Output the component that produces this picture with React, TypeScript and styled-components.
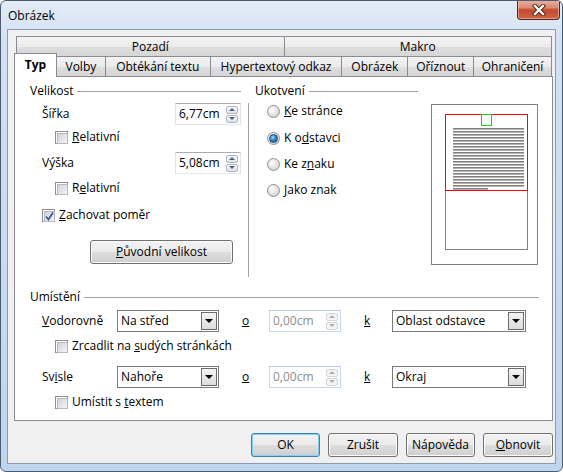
import React from "react";
import styled, { createGlobalStyle, css } from "styled-components";

const GlobalStyle = createGlobalStyle`
  html, body { margin: 0; padding: 0; }
  body {
    width: 563px;
    height: 472px;
    overflow: hidden;
    background: #ffffff;
    font-family: "Open Sans", "Noto Sans", sans-serif;
    font-size: 12px;
    line-height: 16px;
    color: #000;
  }
  * { box-sizing: border-box; }
`;

const Window = styled.div`
  width: 563px;
  height: 472px;
  border: 1px solid #4b5b6f;
  border-radius: 6px;
  background: linear-gradient(180deg, #e3ecf7 0%, #d2e1f2 40px, #bfd5ee 100%);
  display: flex;
  flex-direction: column;
  overflow: hidden;
`;

const TitleBar = styled.div`
  height: 28px;
  display: flex;
  align-items: center;
  padding-left: 7px;
  flex-shrink: 0;
`;

const Title = styled.span`
  margin-top: 2px;
`;

const CloseButton = styled.div`
  margin-left: auto;
  margin-right: 2px;
  align-self: flex-start;
  margin-top: -1px;
  width: 43px;
  height: 20px;
  border: 1px solid #5c2418;
  border-top: none;
  border-radius: 0 0 4px 4px;
  background: linear-gradient(180deg, #eab3a4 0%, #d98a74 40%, #c24a2e 52%, #cf6447 100%);
  box-shadow: inset 0 0 0 1px rgba(255, 210, 200, 0.5);
  display: flex;
  align-items: center;
  justify-content: center;
`;

const Client = styled.div`
  margin: 0 6px 7px 6px;
  flex: 1;
  border: 1px solid #8a9bb1;
  background: #f0f0f0;
  padding: 6px 3px 0 6px;
  display: flex;
  flex-direction: column;
`;

const TabRow = styled.div<{ $first?: boolean }>`
  display: flex;
  height: 20px;
  align-items: flex-end;
  margin-left: ${(p) => (p.$first ? "2px" : "0")};
`;

const Tab = styled.div<{ $w: number; $active?: boolean }>`
  width: ${(p) => p.$w}px;
  height: 20px;
  margin-left: -1px;
  border: 1px solid #898c95;
  border-bottom: none;
  background: linear-gradient(180deg, #f3f3f3 0%, #ebebeb 50%, #dedede 51%, #d6d6d6 100%);
  display: flex;
  align-items: center;
  justify-content: center;
  white-space: nowrap;
  &:first-child { margin-left: 0; }
  ${(p) =>
    p.$active &&
    css`
      height: 24px;
      margin-bottom: -1px;
      background: #ffffff;
      font-weight: 700;
      position: relative;
      z-index: 2;
      padding-bottom: 1px;
    `}
`;

const Panel = styled.div`
  width: 539px;
  height: 345px;
  border: 1px solid #898c95;
  background: #ffffff;
  padding: 6px 13px 0 15px;
  display: flex;
  flex-direction: column;
  position: relative;
  z-index: 1;
`;

const Header = styled.div<{ $top?: number }>`
  display: flex;
  align-items: center;
  height: 16px;
  margin-top: ${(p) => p.$top ?? 0}px;
  &::after {
    content: "";
    flex: 1;
    height: 1px;
    margin-left: 4px;
    background: #a0a0a0;
  }
`;

const TopArea = styled.div`
  display: flex;
  height: 194px;
`;

const LeftColumn = styled.div`
  width: 211px;
  display: flex;
  flex-direction: column;
`;

const Separator = styled.div`
  width: 1px;
  height: 174px;
  margin: 20px 6px 0 7px;
  background: #a0a0a0;
`;

const AnchorColumn = styled.div`
  width: 163px;
  display: flex;
  flex-direction: column;
`;

const PreviewBox = styled.div`
  margin: 21px 0 0 13px;
  width: 107px;
  height: 161px;
`;

const Row = styled.div<{ $top: number; $indent: number }>`
  display: flex;
  align-items: center;
  margin-top: ${(p) => p.$top}px;
  padding-left: ${(p) => p.$indent}px;
  white-space: nowrap;
`;

const FieldLabel = styled.span<{ $w?: number }>`
  width: ${(p) => (p.$w ? `${p.$w}px` : "auto")};
  flex: ${(p) => (p.$w ? "0 0 auto" : "1")};
`;

const SpinField = styled.div<{ $w: number; $disabled?: boolean }>`
  width: ${(p) => p.$w}px;
  height: 22px;
  border: 1px solid ${(p) => (p.$disabled ? "#b4cbe2" : "#abadb3")};
  border-left-color: ${(p) => (p.$disabled ? "#c8d9ea" : "#e2e3ea")};
  border-right-color: ${(p) => (p.$disabled ? "#c8d9ea" : "#e2e3ea")};
  border-bottom-color: ${(p) => (p.$disabled ? "#c8d9ea" : "#e3e9ef")};
  background: #fff;
  color: ${(p) => (p.$disabled ? "#8d8d8d" : "#000")};
  display: flex;
  align-items: center;
  padding: 0 2px 0 3px;
  flex-shrink: 0;
`;

const SpinValue = styled.span`
  flex: 1;
`;

const SpinButtons = styled.div`
  display: flex;
  flex-direction: column;
  gap: 1px;
`;

const SpinButton = styled.div<{ $disabled?: boolean }>`
  width: 12px;
  height: 8px;
  border: 1px solid ${(p) => (p.$disabled ? "#d5d5d5" : "#b1b5ba")};
  border-radius: 2px;
  background: ${(p) =>
    p.$disabled ? "#f4f4f4" : "linear-gradient(180deg, #f5f6f7 0%, #dfe3e8 100%)"};
  display: flex;
  align-items: center;
  justify-content: center;
`;

const Arrow = styled.span<{ $down?: boolean; $disabled?: boolean }>`
  width: 0;
  height: 0;
  border-left: 3px solid transparent;
  border-right: 3px solid transparent;
  ${(p) =>
    p.$down
      ? css`border-top: 3px solid ${p.$disabled ? "#b0b0b0" : "#4d6185"};`
      : css`border-bottom: 3px solid ${p.$disabled ? "#b0b0b0" : "#4d6185"};`}
`;

const ComboBox = styled.div<{ $w: number }>`
  width: ${(p) => p.$w}px;
  height: 22px;
  border: 1px solid #7a7a7a;
  background: #fff;
  display: flex;
  align-items: center;
  padding: 1px 1px 1px 3px;
  flex-shrink: 0;
`;

const ComboText = styled.span`
  flex: 1;
`;

const ComboButton = styled.div`
  width: 16px;
  height: 18px;
  border: 1px solid #6b6b6b;
  background: linear-gradient(180deg, #f4f4f4 0%, #dcdcdc 100%);
  display: flex;
  align-items: center;
  justify-content: center;
  &::before {
    content: "";
    border-left: 4px solid transparent;
    border-right: 4px solid transparent;
    border-top: 4px solid #000;
  }
`;

const Mnemonic = styled.span<{ $w: number; $pad: number }>`
  width: ${(p) => p.$w}px;
  padding-left: ${(p) => p.$pad}px;
  flex-shrink: 0;
  text-decoration: underline;
`;

const CheckBox = styled.span`
  width: 13px;
  height: 13px;
  border: 1px solid #8e8f8f;
  background: #fff;
  padding: 1px;
  margin-right: 4px;
  flex-shrink: 0;
  position: relative;
  &::before {
    content: "";
    display: block;
    width: 100%;
    height: 100%;
    border: 1px solid #b4b9be;
    background: linear-gradient(135deg, #d0d4d9 0%, #f3f4f6 100%);
  }
`;

const CheckMark = styled.svg`
  position: absolute;
  left: 1px;
  top: 1px;
`;

const Radio = styled.span<{ $checked?: boolean }>`
  width: 13px;
  height: 13px;
  border-radius: 50%;
  border: 1px solid #8e8f8f;
  background: radial-gradient(circle at 40% 35%, #ffffff 0%, #e6e6e6 45%, #c9c9c9 100%);
  margin-right: 4px;
  flex-shrink: 0;
  display: flex;
  align-items: center;
  justify-content: center;
  ${(p) =>
    p.$checked &&
    css`
      &::before {
        content: "";
        width: 7px;
        height: 7px;
        border-radius: 50%;
        border: 1px solid #1b4f7c;
        background: radial-gradient(circle at 40% 35%, #a6dcfb 0%, #2b86c9 45%, #0d4b80 100%);
      }
    `}
`;

const PushButton = styled.div<{ $w: number; $default?: boolean }>`
  width: ${(p) => p.$w}px;
  height: 24px;
  border: 1px solid ${(p) => (p.$default ? "#3c7fb1" : "#707070")};
  border-radius: 3px;
  background: linear-gradient(180deg, #f2f2f2 0%, #ebebeb 48%, #dddddd 52%, #cfcfcf 100%);
  box-shadow: inset 0 0 0 1px ${(p) => (p.$default ? "#7fd4f5" : "#fbfbfb")};
  display: flex;
  align-items: center;
  justify-content: center;
  flex-shrink: 0;
`;

const OriginalButton = styled(PushButton)`
  margin: 17px 0 0 60px;
`;

const ButtonBar = styled.div`
  display: flex;
  justify-content: flex-end;
  gap: 8px;
  width: 539px;
  margin-top: 12px;
`;

function Check({ checked }: { checked?: boolean }) {
  return (
    <CheckBox>
      {checked && (
        <CheckMark width="11" height="11" viewBox="0 0 11 11">
          <path d="M2 5.5 L4.5 8.5 L9 1.5" fill="none" stroke="#3a5a9a" strokeWidth="1.8" />
        </CheckMark>
      )}
    </CheckBox>
  );
}

function Spin({ value, w, disabled }: { value: string; w: number; disabled?: boolean }) {
  return (
    <SpinField $w={w} $disabled={disabled}>
      <SpinValue>{value}</SpinValue>
      <SpinButtons>
        <SpinButton $disabled={disabled}>
          <Arrow $disabled={disabled} />
        </SpinButton>
        <SpinButton $disabled={disabled}>
          <Arrow $down $disabled={disabled} />
        </SpinButton>
      </SpinButtons>
    </SpinField>
  );
}

function Combo({ value, w }: { value: string; w: number }) {
  return (
    <ComboBox $w={w}>
      <ComboText>{value}</ComboText>
      <ComboButton />
    </ComboBox>
  );
}

function Preview() {
  const lines = [];
  for (let i = 0; i < 21; i++) {
    const y = 24 + i * 3;
    lines.push(<rect key={i} x={22} y={y} width={i === 20 ? 35 : 71} height={1.6} fill="#808080" />);
  }
  return (
    <svg width="107" height="161" viewBox="0 0 107 161">
      <rect x="0.5" y="0.5" width="106" height="160" fill="#fff" stroke="#808080" />
      <rect x="14.5" y="10.5" width="82" height="135" fill="#fff" stroke="#808080" />
      {lines}
      <rect x="14.5" y="10.5" width="82" height="76" fill="none" stroke="#ff0000" />
      <rect x="50.5" y="10.5" width="10" height="11" fill="none" stroke="#00e000" />
    </svg>
  );
}

const topTabs = [
  { label: "Pozadí", w: 269 },
  { label: "Makro", w: 269 },
];

const tabs = [
  { label: "Typ", w: 43, active: true },
  { label: "Volby", w: 50 },
  { label: "Obtékání textu", w: 106 },
  { label: "Hypertextový odkaz", w: 133 },
  { label: "Obrázek", w: 67 },
  { label: "Oříznout", w: 67 },
  { label: "Ohraničení", w: 79 },
];

export default function App() {
  return (
    <>
      <GlobalStyle />
      <Window>
        <TitleBar>
          <Title>Obrázek</Title>
          <CloseButton>
            <svg width="14" height="12" viewBox="0 0 14 12">
              <path d="M3 2 L11 10 M11 2 L3 10" stroke="#4a1a10" strokeWidth="4.2" strokeLinecap="square" />
              <path d="M3 2 L11 10 M11 2 L3 10" stroke="#ffffff" strokeWidth="2.4" strokeLinecap="square" />
            </svg>
          </CloseButton>
        </TitleBar>
        <Client>
          <TabRow $first>
            {topTabs.map((t) => (
              <Tab key={t.label} $w={t.w}>{t.label}</Tab>
            ))}
          </TabRow>
          <TabRow>
            {tabs.map((t) => (
              <Tab key={t.label} $w={t.w} $active={t.active}>{t.label}</Tab>
            ))}
          </TabRow>
          <Panel>
            <TopArea>
              <LeftColumn>
                <Header>Velikost</Header>
                <Row $top={4} $indent={12}>
                  <FieldLabel>Šířka</FieldLabel>
                  <Spin value="6,77cm" w={66} />
                </Row>
                <Row $top={4} $indent={25}>
                  <Check />
                  <span><u>R</u>elativní</span>
                </Row>
                <Row $top={7} $indent={12}>
                  <FieldLabel>Výška</FieldLabel>
                  <Spin value="5,08cm" w={66} />
                </Row>
                <Row $top={6} $indent={25}>
                  <Check />
                  <span>R<u>e</u>lativní</span>
                </Row>
                <Row $top={11} $indent={12}>
                  <Check checked />
                  <span><u>Z</u>achovat poměr</span>
                </Row>
                <OriginalButton $w={143}>
                  <span><u>P</u>ůvodní velikost</span>
                </OriginalButton>
              </LeftColumn>
              <Separator />
              <AnchorColumn>
                <Header>Ukotvení</Header>
                <Row $top={4} $indent={12}>
                  <Radio />
                  <span><u>K</u>e stránce</span>
                </Row>
                <Row $top={11} $indent={12}>
                  <Radio $checked />
                  <span>K o<u>d</u>stavci</span>
                </Row>
                <Row $top={10} $indent={12}>
                  <Radio />
                  <span>Ke z<u>n</u>aku</span>
                </Row>
                <Row $top={10} $indent={12}>
                  <Radio />
                  <span><u>J</u>ako znak</span>
                </Row>
              </AnchorColumn>
              <PreviewBox>
                <Preview />
              </PreviewBox>
            </TopArea>
            <Header $top={12}>Umístění</Header>
            <Row $top={5} $indent={12}>
              <FieldLabel $w={75}><u>V</u>odorovně</FieldLabel>
              <Combo value="Na střed" w={102} />
              <Mnemonic $w={50} $pad={23}>o</Mnemonic>
              <Spin value="0,00cm" w={72} disabled />
              <Mnemonic $w={51} $pad={23}>k</Mnemonic>
              <Combo value="Oblast odstavce" w={134} />
            </Row>
            <Row $top={6} $indent={25}>
              <Check />
              <span>Zrcadlit na <u>s</u>udých stránkách</span>
            </Row>
            <Row $top={12} $indent={12}>
              <FieldLabel $w={75}>Sv<u>i</u>sle</FieldLabel>
              <Combo value="Nahoře" w={102} />
              <Mnemonic $w={50} $pad={23}>o</Mnemonic>
              <Spin value="0,00cm" w={72} disabled />
              <Mnemonic $w={51} $pad={23}>k</Mnemonic>
              <Combo value="Okraj" w={134} />
            </Row>
            <Row $top={6} $indent={25}>
              <Check />
              <span>Umístit s <u>t</u>extem</span>
            </Row>
          </Panel>
          <ButtonBar>
            <PushButton $w={69} $default>OK</PushButton>
            <PushButton $w={70}>Zrušit</PushButton>
            <PushButton $w={69}>Nápověda</PushButton>
            <PushButton $w={70}><span><u>O</u>bnovit</span></PushButton>
          </ButtonBar>
        </Client>
      </Window>
    </>
  );
}
